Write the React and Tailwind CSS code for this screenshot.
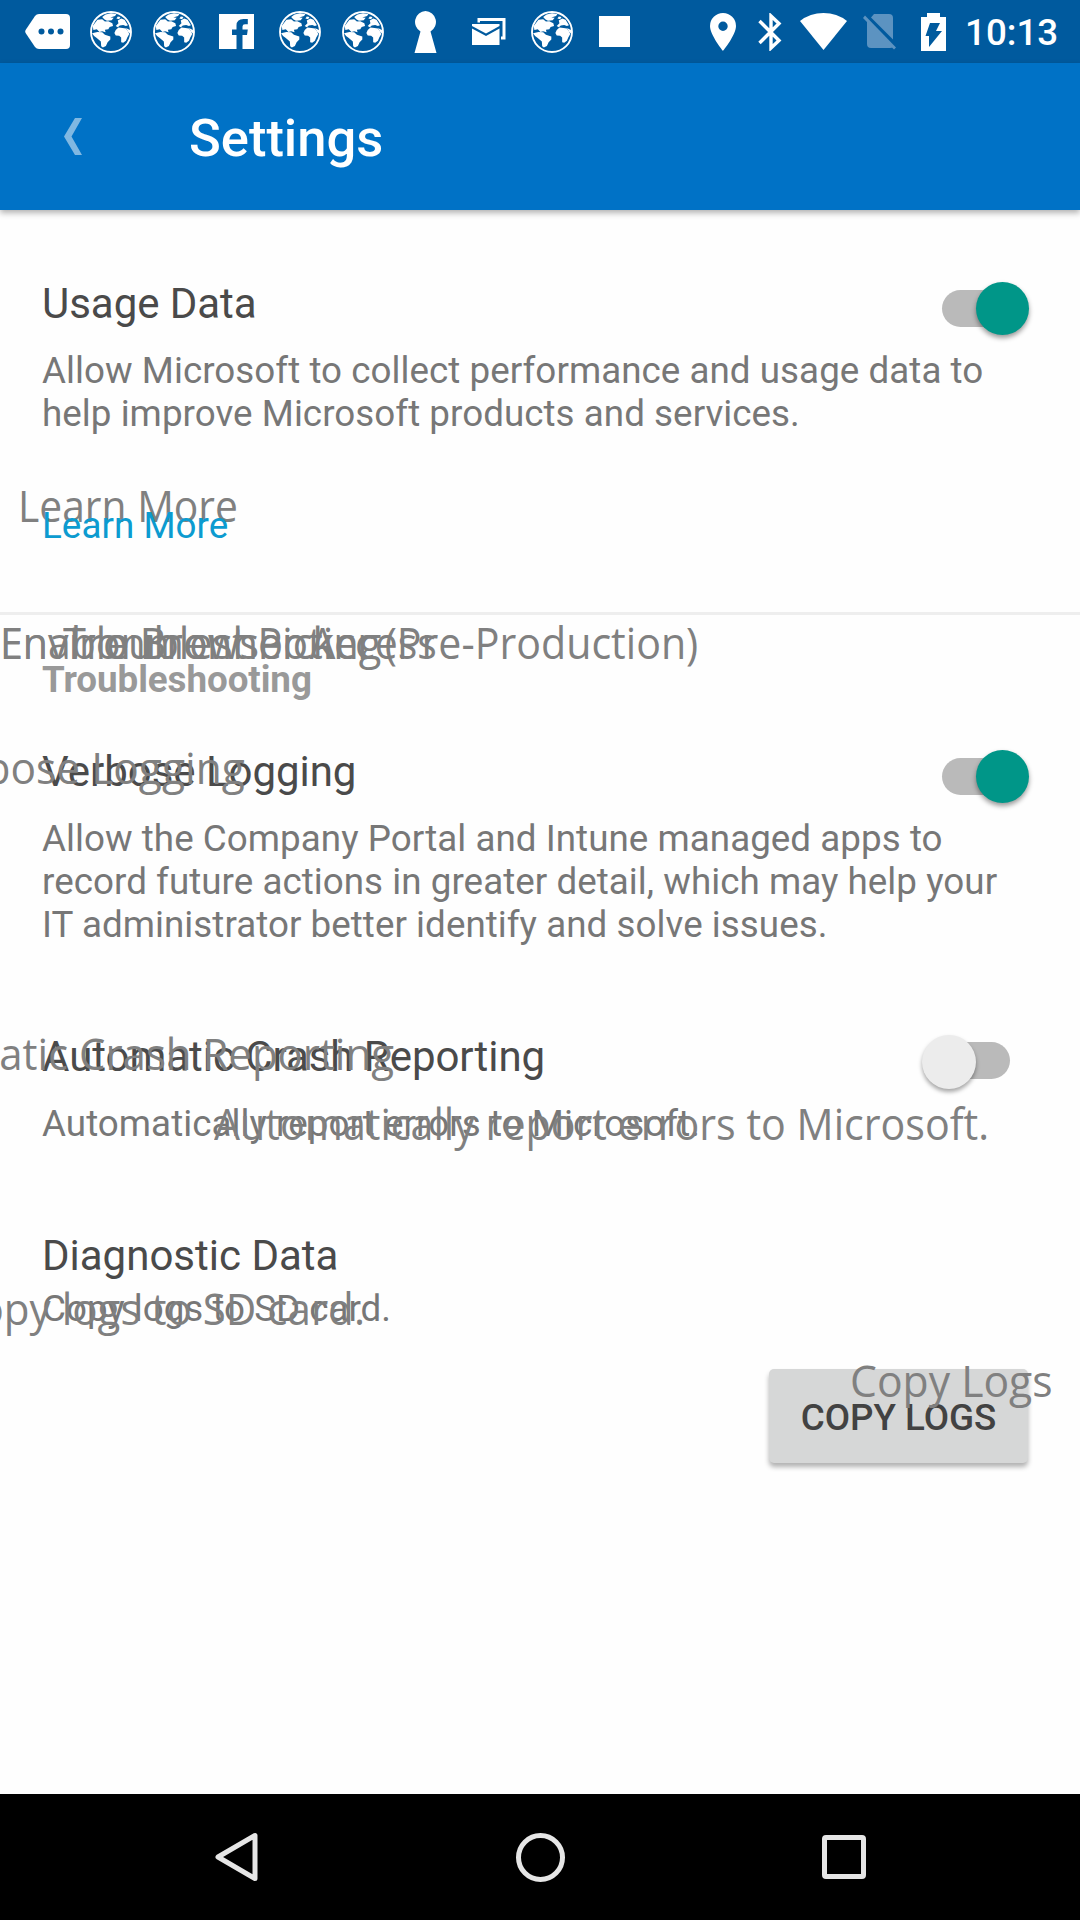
import React from "react";

function Globe() {
  return (
    <svg viewBox="0 0 124 124" className="size-[42px]" fill="#fff">
      <circle cx="62" cy="62" r="59" fill="none" stroke="#fff" strokeWidth="5.5" />
      <path d="M36 18 L46 10 L62 7 L78 9 L74 15 L60 19 L70 20 L64 27 L50 29 L42 24Z" />
      <path d="M8 44 L22 26 L36 24 L44 31 L54 30 L66 36 L68 44 L58 47 L54 54 L44 55 L46 63 L36 60 L28 62 L20 54 L10 56Z" />
      <path d="M6 66 L22 62 L36 63 L44 70 L60 75 L60 84 L52 92 L47 103 L38 108 L33 104 L32 90 L20 80 L12 74Z" />
      <path d="M76 44 L84 36 L82 28 L92 22 L102 26 L112 42 L106 44 L98 41 L88 43 L82 48Z" />
      <path d="M76 56 L84 49 L96 50 L106 52 L112 60 L116 68 L110 78 L106 88 L98 94 L92 92 L92 78 L86 73 L76 72 L72 65Z" />
      <path d="M106 50 L118 56 L120 68 L113 62Z" />
      <path d="M82 16 L90 18 L86 24 L78 22Z" />
    </svg>
  );
}

const notifications = [
  <svg viewBox="0 0 45 35" className="w-[45px] h-[35px]">
    <path d="M14 0H41Q45 0 45 4V31Q45 35 41 35H14Q11.500 35 10 33L.6 19Q-.2 17.500 .6 16L10 2Q11.500 0 14 0Z" fill="#fff" />
    <g fill="#005a9e"><circle cx="16.500" cy="17.500" r="3" /><circle cx="26" cy="17.500" r="3" /><circle cx="35.500" cy="17.500" r="3" /></g>
  </svg>,
  <Globe />,
  <Globe />,
  <svg viewBox="0 0 35 35" className="size-[35px]" fill="#fff">
    <path d="M0 0H35V35H23.500V21H28L28.800 15.500H23.500V12.500Q23.500 10.300 26 10.300H28.800V5H24.500Q17.500 5 17.500 11.500V15.500H13V21H17.500V35H0Z" />
  </svg>,
  <Globe />,
  <Globe />,
  <svg viewBox="0 0 23 42" className="w-[23px] h-[42px]" fill="#fff">
    <path d="M11.500 0A11 11 0 0 1 16.500 20.500L22.500 42H.5L6.500 20.500A11 11 0 0 1 11.500 0Z" />
  </svg>,
  <svg viewBox="0 0 34 27" className="w-[34px] h-[27px]" fill="#fff">
    <path d="M5.500 0H33.500V21.500H29V18.500H30.500V3H8V4.500H5.500Z" />
    <path d="M0 6H27.500V8L14 15.500L0 8Z" />
    <path d="M0 10.500L14 18L27.500 10.500V27H0Z" />
  </svg>,
  <Globe />,
  <div className="size-[31px] bg-white" />,
];

function StatusBar() {
  return (
    <div className="flex h-[63px] items-center bg-[#005a9e] pl-4">
      {notifications.map((icon, i) => (
        <div key={i} className="flex w-[63px] shrink-0 justify-center">{icon}</div>
      ))}
      <svg viewBox="0 0 26 38" className="ml-16 h-[38px] w-[26px] shrink-0" fill="#fff" fillRule="evenodd">
        <path d="M13 0A13 13 0 0 1 26 13C26 22 13 38 13 38S0 22 0 13A13 13 0 0 1 13 0ZM13 8.500A4.700 4.700 0 1 0 13 17.900A4.700 4.700 0 1 0 13 8.500Z" />
      </svg>
      <svg viewBox="0 0 24 38" className="ml-[22px] h-[38px] w-6 shrink-0" fill="none" stroke="#fff" strokeWidth="3.400">
        <path d="M1.500 8L21 27.500L13 35V3L21 10.500L1.500 30" />
      </svg>
      <svg viewBox="0 0 47 37" className="ml-[18px] h-[37px] w-[47px] shrink-0" fill="#fff">
        <path d="M0 8Q10 0 23.500 0T47 8L23.500 37Z" />
      </svg>
      <svg viewBox="0 0 33 36" className="ml-4 h-9 w-[33px] shrink-0" fill="#5c93c1">
        <path d="M11 0H26Q30 0 30 4V25.500L8 3.500Z" />
        <path d="M4 7L30 33Q29 34 27 34H8Q4 34 4 30Z" />
        <path d="M2 1.500L33 33.500L31 35.500L0 4Z" />
      </svg>
      <svg viewBox="0 0 25 38" className="ml-[25px] h-[38px] w-[25px] shrink-0" fill="#fff" fillRule="evenodd">
        <path d="M6 0H19V4H25V38H0V4H6ZM9 10H19L15 18H21L8 34V23H4.500Z" />
      </svg>
      <span className="mt-0.5 ml-[19px] text-[36.75px] leading-[43px] font-medium text-white">10:13</span>
    </div>
  );
}

function Switch({ on }) {
  return on ? (
    <div className="relative mt-[3px] h-[53px] w-[87px] shrink-0">
      <div className="absolute top-2 left-0 h-[37px] w-[76px] rounded-full bg-[#bababa]" />
      <div className="absolute top-0 right-0 size-[53px] rounded-full bg-[#009688] shadow-[0_3px_5px_rgba(0,0,0,0.4)]" />
    </div>
  ) : (
    <div className="relative mt-[3px] mr-[19px] h-[53px] w-[88px] shrink-0">
      <div className="absolute top-[7px] right-0 h-[37px] w-[76px] rounded-full bg-[#bababa]" />
      <div className="absolute top-0 left-0 size-[54px] rounded-full bg-[#ececec] shadow-[0_3px_4px_rgba(0,0,0,0.35)]" />
    </div>
  );
}

function Setting({ title, on, lines }) {
  return (
    <section>
      <div className="flex h-[49px] items-start justify-between">
        <h2 className="text-[42px] leading-[49px] tracking-[-0.04px] text-[#4a4a4a]">{title}</h2>
        <Switch on={on} />
      </div>
      <p className="mt-[21px] text-[36.75px] leading-[43px] tracking-[0.045px] whitespace-nowrap text-[#777]">
        {lines.map((l) => (
          <span key={l} className="block">{l}</span>
        ))}
      </p>
    </section>
  );
}

function Ghost({ className, children }) {
  return (
    <span
      aria-hidden="true"
      className={
        "absolute origin-left font-['Open_Sans',sans-serif] text-[44px] leading-[60px] whitespace-nowrap text-[#808080] " +
        className
      }
    >
      {children}
    </span>
  );
}

export default function App() {
  return (
    <div className="relative flex h-[1920px] w-[1080px] flex-col overflow-hidden bg-[#fefefe] font-[Roboto,sans-serif]">
      <StatusBar />
      <header className="flex h-[147px] items-center bg-[#0072c6] pl-16 shadow-[0_3px_6px_rgba(0,0,0,0.3)]">
        <svg viewBox="0 0 18 37" className="h-[37px] w-[18px]" fill="#80b8e2">
          <path d="M11 0H18L7.500 18.500L18 37H11L0 18.500Z" />
        </svg>
        <h1 className="mt-[3px] ml-[107px] text-[52.5px] leading-[62px] font-medium text-white">Settings</h1>
      </header>

      <main className="flex-1 pt-[69px]">
        <div className="pr-[51px] pl-[42px]">
          <Setting
            title="Usage Data"
            on
            lines={[
              "Allow Microsoft to collect performance and usage data to",
              "help improve Microsoft products and services.",
            ]}
          />
          <Ghost className="top-[475px] left-[18px] scale-x-[0.927]">Learn More</Ghost>
          <a className="relative mt-[69px] block text-[36.75px] leading-[43px] tracking-[0.055px] text-[#0c9bd0]">Learn More</a>
        </div>
        <hr className="mt-[65px] h-[3px] border-0 bg-[#eeeeee]" />
        <div className="pt-[43px] pr-[51px] pl-[42px]">
          <h3 className="text-[36.75px] leading-[43px] font-bold tracking-[-0.06px] text-[#999]">Troubleshooting</h3>
          <div className="mt-[46px]">
            <Setting
              title="Verbose Logging"
              on
              lines={[
                "Allow the Company Portal and Intune managed apps to",
                "record future actions in greater detail, which may help your",
                "IT administrator better identify and solve issues.",
              ]}
            />
          </div>
          <div className="mt-[86px]">
            <Setting
              title="Automatic Crash Reporting"
              on={false}
              lines={["Automatically report errors to Microsoft."]}
            />
          </div>
          <h2 className="mt-[86px] text-[42px] leading-[49px] text-[#4a4a4a]">Diagnostic Data</h2>
          <p className="mt-[7px] text-[36.75px] leading-[43px] text-[#777]">Copy logs to SD card.</p>
          <button className="mt-[39px] mr-px ml-auto flex h-[94px] w-[259px] items-center justify-center rounded-[5px] bg-[#d6d7d7] pt-[3px] text-[36.75px] leading-[43px] font-medium text-[#424242] shadow-[0_4px_5px_rgba(0,0,0,0.3)]">
            COPY LOGS
          </button>
        </div>
        <Ghost className="top-[612px] left-0 scale-x-[0.935]">Environment Picker (Pre-Production)</Ghost>
        <Ghost className="top-[612px] left-0 scale-x-[0.932]">Enable Browser Access</Ghost>
        <Ghost className="top-[612px] left-[63px] scale-x-[0.945]">Troubleshooting</Ghost>
        <Ghost className="top-[737px] left-[-82px] scale-x-[0.965]">Verbose Logging</Ghost>
        <Ghost className="top-[1023px] left-[-132px] scale-x-[0.953]">Automatic Crash Reporting</Ghost>
        <Ghost className="top-[1093px] left-[214px] scale-x-[0.936]">Automatically report errors to Microsoft.</Ghost>
        <Ghost className="top-[1278px] left-[-48px] scale-x-[0.957]">Copy logs to SD card.</Ghost>
        <Ghost className="top-[1350px] left-[850px] scale-x-[0.97]">Copy Logs</Ghost>
      </main>

      <nav className="flex h-[126px] items-center bg-black pl-[214px]">
        <svg viewBox="0 0 45 50" className="h-[50px] w-[45px]" fill="none" stroke="#e6e6e6" strokeWidth="5" strokeLinejoin="round">
          <path d="M41 3.500V46.500L4 25Z" />
        </svg>
        <div className="ml-[257px] size-[49px] rounded-full border-[5px] border-[#e6e6e6]" />
        <div className="ml-[257px] size-11 rounded-[4px] border-[5px] border-[#e6e6e6]" />
      </nav>
    </div>
  );
}
